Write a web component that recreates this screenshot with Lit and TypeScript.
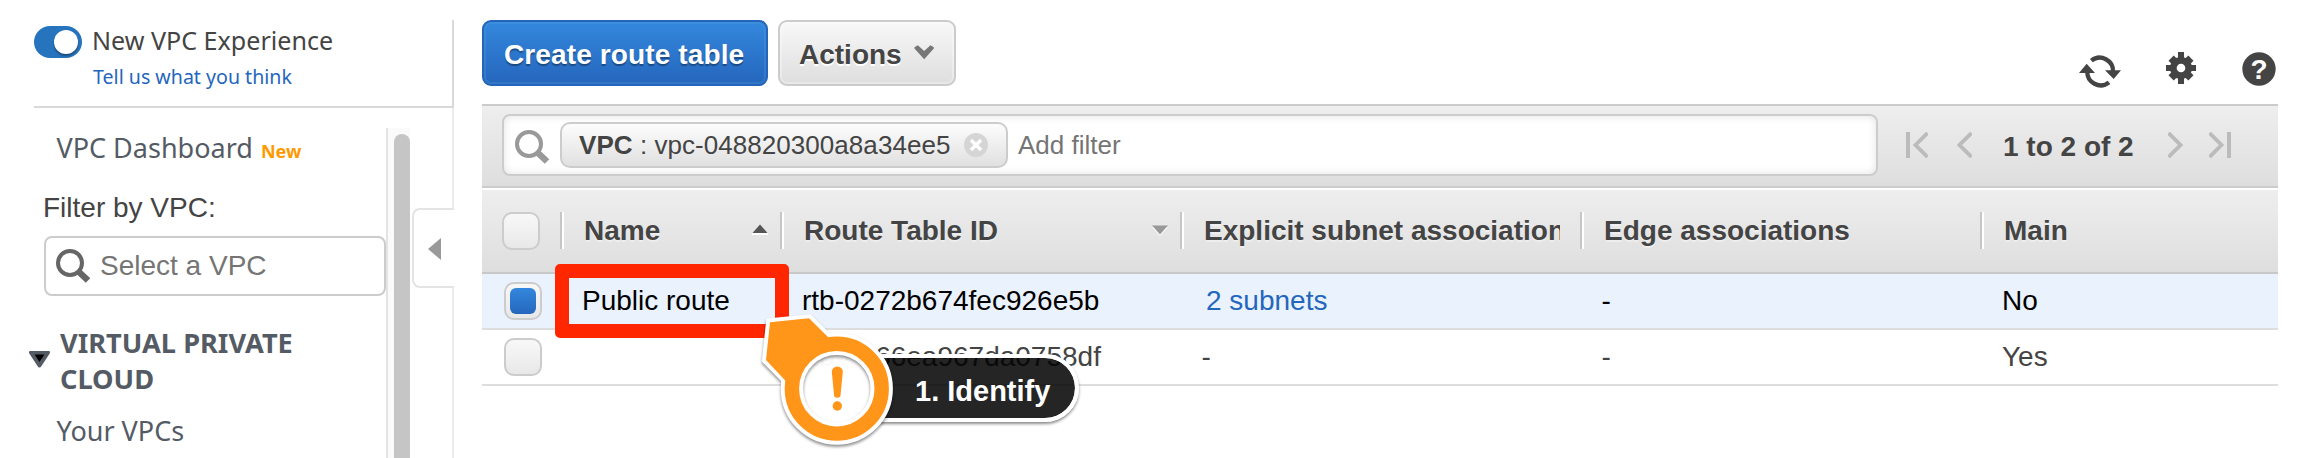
import { LitElement, html, svg, css, nothing } from "lit";
import { customElement } from "lit/decorators.js";
import { classMap } from "lit/directives/class-map.js";

interface RouteTable {
  name: string;
  id: string;
  subnets: string;
  edge: string;
  main: string;
  selected: boolean;
}

const ROWS: RouteTable[] = [
  { name: "Public route", id: "rtb-0272b674fec926e5b", subnets: "2 subnets", edge: "-", main: "No", selected: true },
  { name: "", id: "rtb-0366ea967da0758df", subnets: "-", edge: "-", main: "Yes", selected: false },
];

const magnifier = (color: string) => html`<svg width="35" height="35" viewBox="0 0 35 35">
  <circle cx="14" cy="14" r="12" fill="none" stroke=${color} stroke-width="4" />
  <path d="M22.5 22.5 L32 31.5" stroke=${color} stroke-width="6.5" fill="none" />
</svg>`;

@customElement("vpc-sidebar")
export class VpcSidebar extends LitElement {
  static styles = css`
    :host {
      display: flex;
      flex-direction: column;
      width: 454px;
      height: 458px;
      box-sizing: border-box;
      padding-top: 20px;
      overflow: hidden;
      font-family: "Noto Sans", sans-serif;
      color: #545b64;
    }
    .experience {
      display: flex;
      gap: 10px;
      box-sizing: border-box;
      height: 88px;
      flex: none;
      margin-left: 34px;
      padding-top: 4px;
      border-bottom: 2px solid #d9d9d9;
      border-right: 2px solid #d9d9d9;
    }
    .toggle {
      display: flex;
      justify-content: flex-end;
      box-sizing: border-box;
      width: 48px;
      height: 32px;
      margin-top: 2px;
      padding: 4px;
      border-radius: 16px;
      background: #2774be;
    }
    .knob {
      width: 24px;
      height: 24px;
      border-radius: 50%;
      background: #fff;
      box-shadow: 0 2px 2px rgba(0, 0, 0, 0.35);
    }
    .title {
      font-size: 25.1px;
      line-height: 32px;
      color: #444;
      white-space: nowrap;
    }
    .feedback {
      margin: 9px 0 0 1px;
      font-size: 19.6px;
      line-height: 24px;
      color: #2566bd;
      white-space: nowrap;
    }
    .body {
      display: flex;
      flex: 1;
      min-height: 0;
    }
    .nav {
      width: 386px;
      flex: none;
      box-sizing: border-box;
      padding: 22px 0 0 44px;
      font-size: 27px;
      line-height: 36px;
    }
    .item {
      padding-left: 12.5px;
      white-space: nowrap;
    }
    .new {
      margin-left: 8px;
      font-size: 18px;
      line-height: 18px;
      font-weight: 700;
      color: #ff9900;
    }
    .label {
      margin: 26px 0 12px -1px;
      font: 28px/32px "Liberation Sans", Arial, sans-serif;
      color: #444;
    }
    .select {
      display: flex;
      align-items: center;
      gap: 9px;
      box-sizing: border-box;
      height: 60px;
      padding-left: 10px;
      border: 2px solid #ccc;
      border-radius: 8px;
      background: #fff;
      font: 28px/56px "Liberation Sans", Arial, sans-serif;
      color: #757575;
    }
    .group {
      display: flex;
      gap: 10px;
      margin: 29px 0 16px -15px;
      font-size: 27.2px;
      font-weight: 700;
    }
    .group svg {
      margin-top: 26px;
      flex: none;
    }
    .scroll {
      box-sizing: border-box;
      width: 24px;
      flex: none;
      margin-top: 20px;
      padding: 6px 0 0 6px;
      border-left: 2px solid #e4e4e4;
      background: #fafafa;
    }
    .thumb {
      width: 16px;
      height: 400px;
      border-radius: 8px;
      background: #c5c5c5;
    }
    .edge {
      display: flex;
      flex-direction: column;
      align-items: flex-end;
      flex: 1;
    }
    .rule {
      width: 2px;
      height: 100px;
      background: #ececec;
    }
    .rest {
      flex: 1;
    }
    .collapse {
      display: flex;
      align-items: center;
      box-sizing: border-box;
      width: 42px;
      height: 80px;
      padding: 2px 0 0 14px;
      border: 2px solid #e4e4e4;
      border-right: none;
      border-radius: 8px 0 0 8px;
    }
  `;

  render() {
    return html`
      <div class="experience">
        <div class="toggle"><div class="knob"></div></div>
        <div>
          <div class="title">New VPC Experience</div>
          <div class="feedback">Tell us what you think</div>
        </div>
      </div>
      <div class="body">
        <div class="nav">
          <div class="item">VPC Dashboard<span class="new">New</span></div>
          <div class="label">Filter by VPC:</div>
          <div class="select">${magnifier("#666")}<span>Select a VPC</span></div>
          <div class="group">
            <svg width="21" height="17" viewBox="0 0 21 17">
              <path d="M2 1.5 H19 L10.5 14.5 Z" fill="#000" stroke="#545b64" stroke-width="4" stroke-linejoin="round" />
              <path d="M6.5 4.5 H14.5 L10.5 10 Z" fill="#000" />
            </svg>
            <div>VIRTUAL PRIVATE<br />CLOUD</div>
          </div>
          <div class="item">Your VPCs</div>
        </div>
        <div class="scroll"><div class="thumb"></div></div>
        <div class="edge">
          <div class="rule"></div>
          <div class="collapse">
            <svg width="13" height="22" viewBox="0 0 13 22"><path d="M13 0 V22 L0 11 Z" fill="#999" /></svg>
          </div>
          <div class="rule rest"></div>
        </div>
      </div>
    `;
  }
}

@customElement("step-callout")
export class StepCallout extends LitElement {
  static styles = css`
    :host {
      display: block;
      position: absolute;
      left: 755px;
      top: 300px;
      width: 340px;
      height: 158px;
    }
    .pill {
      position: absolute;
      left: 82px;
      top: 54px;
      box-sizing: border-box;
      width: 242px;
      height: 68px;
      padding-left: 74px;
      border: 4px solid #fff;
      border-radius: 34px;
      background: rgba(0, 0, 0, 0.855);
      background-clip: padding-box;
      box-shadow: 0 2px 3px rgba(0, 0, 0, 0.45);
      color: #fff;
      font: 700 29px/66px "Liberation Sans", Arial, sans-serif;
      white-space: nowrap;
    }
    .badge {
      position: absolute;
      left: 0;
      top: 0;
    }
    .lift {
      filter: drop-shadow(0 2px 1.5px rgba(0, 0, 0, 0.45));
    }
  `;

  render() {
    return html`
      <div class="pill">1. Identify</div>
      <svg class="badge" width="150" height="158" viewBox="0 0 150 158">
        <circle cx="81.8" cy="88.7" r="35" fill="#fff" fill-opacity="0.97" />
        <path d="M81.8 60 H112 A35 35 0 0 1 112 112 H81.8 Z" fill="#fff" />
        <g class="lift">
          <path d="M15 22.3 L54 18.3 L72.7 36.7 L30.7 80 L11 60 Z" fill="#fff" stroke="#fff" stroke-width="8" />
          <circle cx="81.8" cy="88.7" r="44.9" fill="none" stroke="#fff" stroke-width="22.4" />
        </g>
        <path d="M15 22.3 L54 18.3 L73.5 37.5 L30.7 81 L11 60 Z" fill="#ff9519" />
        <circle cx="81.8" cy="88.7" r="44.9" fill="none" stroke="#ff9519" stroke-width="14.4" />
        <path d="M76.8 72 A5.5 5.5 0 0 1 87.8 72 L85.6 94.5 A3.3 3.3 0 0 1 79 94.5 Z" fill="#ff9519" />
        <circle cx="82.3" cy="106" r="4.7" fill="#ff9519" />
      </svg>
    `;
  }
}

@customElement("app-root")
export class AppRoot extends LitElement {
  static styles = css`
    :host {
      display: flex;
      gap: 28px;
      position: relative;
      width: 2302px;
      height: 458px;
      overflow: hidden;
      background: #fff;
      font-family: "Liberation Sans", Arial, sans-serif;
      font-size: 28px;
      color: #444;
    }
    .main {
      width: 1796px;
      display: flex;
      flex-direction: column;
    }
    .actions {
      display: flex;
      gap: 10px;
      box-sizing: border-box;
      height: 104px;
      padding-top: 20px;
    }
    .button {
      display: flex;
      align-items: center;
      box-sizing: border-box;
      height: 66px;
      padding: 3px 20px 0;
      border: 2px solid #ccc;
      border-radius: 9px;
      background: linear-gradient(#f8f8f8, #dedede);
      box-shadow: inset 0 0 0 2px rgba(255, 255, 255, 0.3);
      font-weight: 700;
      text-shadow: 0 2px 0 #fff;
      white-space: nowrap;
    }
    .menu {
      width: 178px;
      padding-left: 19px;
      gap: 12px;
    }
    .menu svg {
      margin-bottom: 6px;
    }
    .primary {
      width: 286px;
      letter-spacing: 0.12px;
      border-color: #2465bb;
      background: linear-gradient(#3388dd, #2566bd);
      box-shadow: inset 0 0 0 2px rgba(80, 160, 220, 0.3);
      color: #fff;
      text-shadow: 0 2px 1px rgba(0, 0, 0, 0.35);
    }
    .tools {
      display: flex;
      align-items: flex-start;
      margin: 30px 2px 0 auto;
    }
    .refresh {
      margin-right: 44px;
    }
    .gear {
      margin-right: 46px;
    }
    .mark {
      font-size: 84px;
      font-weight: 700;
    }
    .filterbar {
      display: flex;
      align-items: center;
      box-sizing: border-box;
      height: 84px;
      padding: 0 48px 2px 20px;
      border-top: 2px solid #ccc;
      border-bottom: 2px solid #ccc;
      background: linear-gradient(#eee, #dedede);
      margin-bottom: 2px;
    }
    .search {
      display: flex;
      flex: none;
      align-items: center;
      box-sizing: border-box;
      width: 1376px;
      height: 62px;
      padding-left: 11px;
      border: 2px solid #ccc;
      border-radius: 8px;
      background: #fff;
      box-shadow: inset 0 0 8px rgba(0, 0, 0, 0.12);
      font-size: 26px;
      color: #757575;
    }
    .search > svg {
      margin-top: 4px;
    }
    .chip {
      display: flex;
      align-items: center;
      box-sizing: border-box;
      width: 448px;
      height: 46px;
      margin: 0 10px 0 10px;
      padding-left: 17px;
      border: 2px solid #ccc;
      border-radius: 10px;
      background: linear-gradient(#fdfdfd, #e0e0e0);
      color: #444;
      letter-spacing: 0.05px;
      white-space: pre;
    }
    .chip svg {
      margin-left: 14px;
    }
    .pager {
      display: flex;
      flex: none;
      align-items: center;
      margin-left: 28px;
    }
    .prev {
      margin-left: 29px;
    }
    .range {
      width: 131px;
      margin: 3px 34px 0 31px;
      font-weight: 700;
      white-space: nowrap;
    }
    .last {
      margin-left: 26px;
    }
    .row {
      display: grid;
      grid-template-columns: 78px 220px 400px 400px 400px 1fr;
      box-sizing: border-box;
      height: 56px;
      border-bottom: 2px solid #ddd;
      line-height: 53px;
      white-space: nowrap;
    }
    .cell {
      padding-left: 22px;
      overflow: hidden;
    }
    .dash {
      padding-left: 21.5px;
    }
    .picked {
      background: #eaf2fe;
      color: #000;
    }
    .link {
      padding-left: 26px;
      color: #2566bd;
    }
    .head {
      height: 84px;
      border-bottom-color: #c8c8c8;
      background: linear-gradient(#eee, #dedede);
      font-weight: 700;
      line-height: 81px;
      text-shadow: 0 2px 0 rgba(255, 255, 255, 0.4);
    }
    .column {
      display: flex;
      padding: 0 12px 0 0;
    }
    .column::before {
      content: "";
      width: 2px;
      height: 37px;
      flex: none;
      margin: 22px 20px 0 0;
      background: #c6c6c6;
      border-right: 2px solid #fff;
    }
    .text {
      flex: 1;
      overflow: hidden;
    }
    .column svg {
      margin-top: 34px;
      flex: none;
    }
    .explicit {
      padding-right: 20px;
    }
    .check {
      padding: 8px 0 0 22px;
    }
    .head .check {
      padding: 22px 0 0 20px;
    }
    .box {
      box-sizing: border-box;
      width: 38px;
      height: 38px;
      padding: 4px;
      border: 2px solid #ccc;
      border-radius: 10px;
      background: linear-gradient(#f8f8f8, #e8e8e8);
    }
    .fill {
      width: 26px;
      height: 26px;
      border-radius: 6px;
      background: linear-gradient(#3388dd, #2566bd);
    }
    .highlight {
      position: absolute;
      left: 555px;
      top: 264px;
      box-sizing: border-box;
      width: 234px;
      height: 74px;
      border: 14px solid #ff2600;
      border-radius: 5px;
    }
  `;

  private column(label: string, sort?: "up" | "down", extra = "") {
    return html`<div class=${"column " + extra}>
      <div class="text">${label}</div>
      ${sort
        ? html`<svg width="16" height="12" viewBox="0 0 16 12">
            ${sort === "up"
              ? svg`<path d="M0 10 H16" stroke="#fff" stroke-width="2" /><path d="M0.5 9 L8 0.5 L15.5 9 Z" fill="#555" />`
              : svg`<path d="M0 3 L8 12 L16 3 Z" fill="#fff" /><path d="M0 1.5 H16 L8 10.5 Z" fill="#999" />`}
          </svg>`
        : nothing}
    </div>`;
  }

  private row(r: RouteTable) {
    return html`<div class=${classMap({ row: true, picked: r.selected })}>
      <div class="check"><div class="box">${r.selected ? html`<div class="fill"></div>` : nothing}</div></div>
      <div class="cell">${r.name}</div>
      <div class="cell">${r.id}</div>
      <div class=${classMap({ cell: true, link: r.subnets !== "-", dash: r.subnets === "-" })}>${r.subnets}</div>
      <div class="cell dash">${r.edge}</div>
      <div class="cell">${r.main}</div>
    </div>`;
  }

  private arrow(cls: string, bar: boolean, right: boolean) {
    const w = bar ? 22 : 15;
    return html`<svg class=${cls} width=${w} height="26" viewBox="0 0 ${w} 26">
      <g transform=${right ? `translate(${w} 0) scale(-1 1)` : ""} fill="none" stroke="#bbb">
        ${bar ? svg`<path d="M2 0 V26" stroke-width="4" />` : nothing}
        <path d="M${w - 0.5} 1 L${w - 12.5} 13 L${w - 0.5} 25" stroke-width="3.8" />
      </g>
    </svg>`;
  }

  render() {
    return html`
      <vpc-sidebar></vpc-sidebar>
      <div class="main">
        <div class="actions">
          <div class="button primary">Create route table</div>
          <div class="button menu">
            Actions
            <svg width="21" height="16" viewBox="0 0 21 16">
              <path d="M0.5 3 L4 1 L10.5 7 L17 1 L20.5 3 V4.5 L10.5 15.5 L0.5 4.5 Z" fill="#777" />
            </svg>
          </div>
          <div class="tools">
            <svg class="refresh" width="43" height="40" viewBox="58 30 129 120" fill="none" stroke="#444" stroke-width="13">
              <path d="M95 62 A40 40 0 0 1 160 96" />
              <path d="M148 127 A40 40 0 0 1 83 93" />
              <path d="M136 91 H184 L162 117 Z M58 99 H106 L81 71 Z" fill="#444" stroke="none" />
            </svg>
            <svg class="gear" width="30" height="40" viewBox="318 30 90 120" fill="#444">
              <rect x="354" y="36" width="18" height="96" />
              <rect x="318" y="75" width="90" height="18" />
              <rect x="352" y="42" width="22" height="84" transform="rotate(45 363 84)" />
              <rect x="352" y="42" width="22" height="84" transform="rotate(-45 363 84)" />
              <circle cx="363" cy="84" r="33" />
              <circle cx="363" cy="84" r="13" fill="#fff" />
            </svg>
            <svg width="34" height="40" viewBox="546 30 102 120">
              <circle cx="597" cy="87" r="50" fill="#444" />
              <text class="mark" x="597" y="118" fill="#fff" text-anchor="middle">?</text>
            </svg>
          </div>
        </div>
        <div class="filterbar">
          <div class="search">
            ${magnifier("#999")}
            <div class="chip"><b>VPC</b> : vpc-048820300a8a34ee5<svg width="24" height="24" viewBox="0 0 24 24">
                <circle cx="12" cy="12" r="12" fill="#d5d5d5" />
                <path d="M7 7 L17 17 M17 7 L7 17" stroke="#fff" stroke-width="3.4" />
              </svg></div>
            Add filter
          </div>
          <div class="pager">
            ${this.arrow("first", true, false)} ${this.arrow("prev", false, false)}
            <div class="range">1 to 2 of 2</div>
            ${this.arrow("next", false, true)} ${this.arrow("last", true, true)}
          </div>
        </div>
        <div class="row head">
          <div class="check"><div class="box"></div></div>
          ${this.column("Name", "up")} ${this.column("Route Table ID", "down")}
          ${this.column("Explicit subnet associations", undefined, "explicit")}
          ${this.column("Edge associations")} ${this.column("Main")}
        </div>
        ${ROWS.map((r) => this.row(r))}
      </div>
      <div class="highlight"></div>
      <step-callout></step-callout>
    `;
  }
}
